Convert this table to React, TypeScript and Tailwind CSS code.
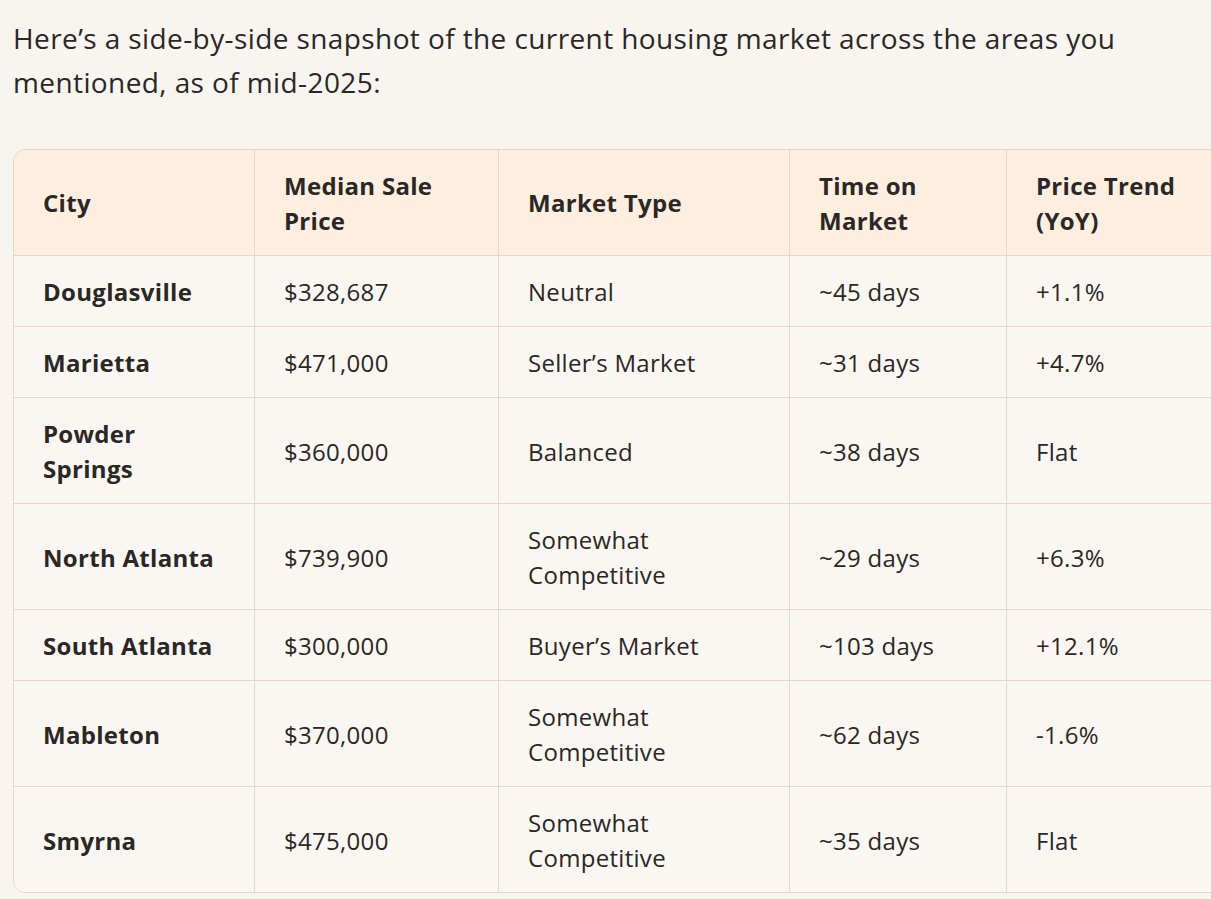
import React from "react";

const rows = [
  { city: "Douglasville", price: "$328,687", type: "Neutral", time: "~45 days", trend: "+1.1%" },
  { city: "Marietta", price: "$471,000", type: "Seller’s Market", time: "~31 days", trend: "+4.7%" },
  { city: "Powder Springs", price: "$360,000", type: "Balanced", time: "~38 days", trend: "Flat" },
  { city: "North Atlanta", price: "$739,900", type: "Somewhat Competitive", time: "~29 days", trend: "+6.3%" },
  { city: "South Atlanta", price: "$300,000", type: "Buyer’s Market", time: "~103 days", trend: "+12.1%" },
  { city: "Mableton", price: "$370,000", type: "Somewhat Competitive", time: "~62 days", trend: "-1.6%" },
  { city: "Smyrna", price: "$475,000", type: "Somewhat Competitive", time: "~35 days", trend: "Flat" },
];

const headers = ["City", "Median Sale Price", "Market Type", "Time on Market", "Price Trend (YoY)"];
const widths = ["w-[240px]", "w-[244px]", "w-[291px]", "w-[217px]", "w-[240px]"];

export default function App() {
  return (
    <div className="min-h-[899px] w-full overflow-hidden bg-[#f8f5f1] font-['Open_Sans','Liberation_Sans',sans-serif] text-[#2b2724]">
      <p className="w-[1150px] pl-[13px] pt-[16px] text-[28px] leading-[44px] tracking-[0.4px]">
        Here’s a side-by-side snapshot of the current housing market across the areas you mentioned, as of mid-2025:
      </p>
      <div className="mt-[45px] ml-[13px] w-[1232px]">
        <table className="w-[1232px] table-fixed border-separate border-spacing-0 overflow-hidden rounded-[12px] border border-[#e5d6ca] text-[24px] leading-[35px] tracking-[0.3px]">
          <thead>
            <tr className="bg-[#fdeee0]">
              {headers.map((h, i) => (
                <th
                  key={h}
                  className={`${widths[i]} h-[105px] px-[29px] text-left align-middle font-bold ${i > 0 ? "border-l border-[#e5d6ca]" : ""}`}
                >
                  {h}
                </th>
              ))}
            </tr>
          </thead>
          <tbody className="bg-[#faf7f3]">
            {rows.map((r) => {
              const cells = [r.city, r.price, r.type, r.time, r.trend];
              return (
                <tr key={r.city}>
                  {cells.map((c, i) => (
                    <td
                      key={i}
                      className={`border-t border-[#e5d6ca] px-[29px] pt-[18px] pb-[17px] align-middle ${i === 0 ? "font-bold" : ""} ${i > 0 ? "border-l" : ""}`}
                    >
                      {c}
                    </td>
                  ))}
                </tr>
              );
            })}
          </tbody>
        </table>
      </div>
    </div>
  );
}
